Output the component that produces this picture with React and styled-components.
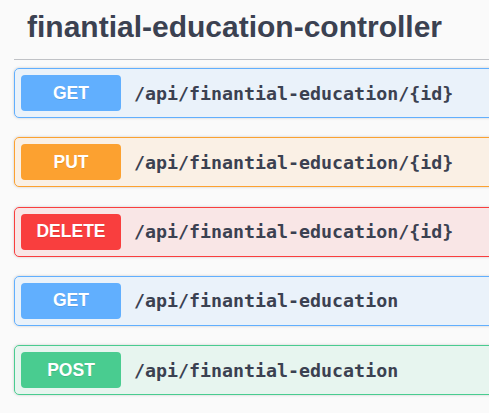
import React from "react";
import styled, { createGlobalStyle } from "styled-components";

const GlobalStyle = createGlobalStyle`
  html, body {
    margin: 0;
    padding: 0;
    background: #fafafa;
  }
`;

const METHOD_COLORS = {
  get: "97, 175, 254",
  put: "252, 161, 48",
  delete: "249, 62, 62",
  post: "73, 204, 144",
};

const Page = styled.div`
  width: 100vw;
  height: 100vh;
  overflow: hidden;
`;

const Wrapper = styled.div`
  width: 640px;
  padding: 0 0 0 14px;
  box-sizing: border-box;
`;

const TagHeading = styled.h4`
  display: flex;
  align-items: center;
  margin: 0 0 8px;
  padding: 10px 25px 15px 13px;
  border-bottom: 1px solid rgba(59, 65, 81, 0.3);
  font-family: "Liberation Sans", Arial, sans-serif;
  font-size: 30px;
  font-weight: 700;
  color: #3b4151;
  line-height: normal;
`;

const OpBlockList = styled.div`
  display: flex;
  flex-direction: column;
  gap: 19.3px;
`;

const OpBlock = styled.div`
  display: flex;
  align-items: center;
  padding: 6px;
  border: 1px solid rgb(${(p) => METHOD_COLORS[p.$method]});
  border-radius: 5px;
  background: rgba(${(p) => METHOD_COLORS[p.$method]}, 0.1);
  box-shadow: 0 0 3px rgba(0, 0, 0, 0.19);
`;

const MethodBadge = styled.span`
  min-width: 100px;
  padding: 7.5px 0;
  border-radius: 4px;
  background: rgb(${(p) => METHOD_COLORS[p.$method]});
  color: #fff;
  text-align: center;
  text-transform: uppercase;
  font-family: "Liberation Sans", Arial, sans-serif;
  font-size: 17.5px;
  font-weight: 700;
  line-height: 21px;
  text-shadow: 0 1px 0 rgba(0, 0, 0, 0.1);
`;

const Path = styled.span`
  padding: 0 13px;
  font-family: "DejaVu Sans Mono", "Liberation Mono", monospace;
  font-size: 18.3px;
  font-weight: 700;
  color: #3b4151;
`;

const operations = [
  { method: "get", path: "/api/finantial-education/{id}" },
  { method: "put", path: "/api/finantial-education/{id}" },
  { method: "delete", path: "/api/finantial-education/{id}" },
  { method: "get", path: "/api/finantial-education" },
  { method: "post", path: "/api/finantial-education" },
];

const App = () => (
  <Page>
    <GlobalStyle />
    <Wrapper>
      <TagHeading>finantial-education-controller</TagHeading>
      <OpBlockList>
        {operations.map((op, i) => (
          <OpBlock key={i} $method={op.method}>
            <MethodBadge $method={op.method}>{op.method}</MethodBadge>
            <Path>{op.path}</Path>
          </OpBlock>
        ))}
      </OpBlockList>
    </Wrapper>
  </Page>
);

export default App;
